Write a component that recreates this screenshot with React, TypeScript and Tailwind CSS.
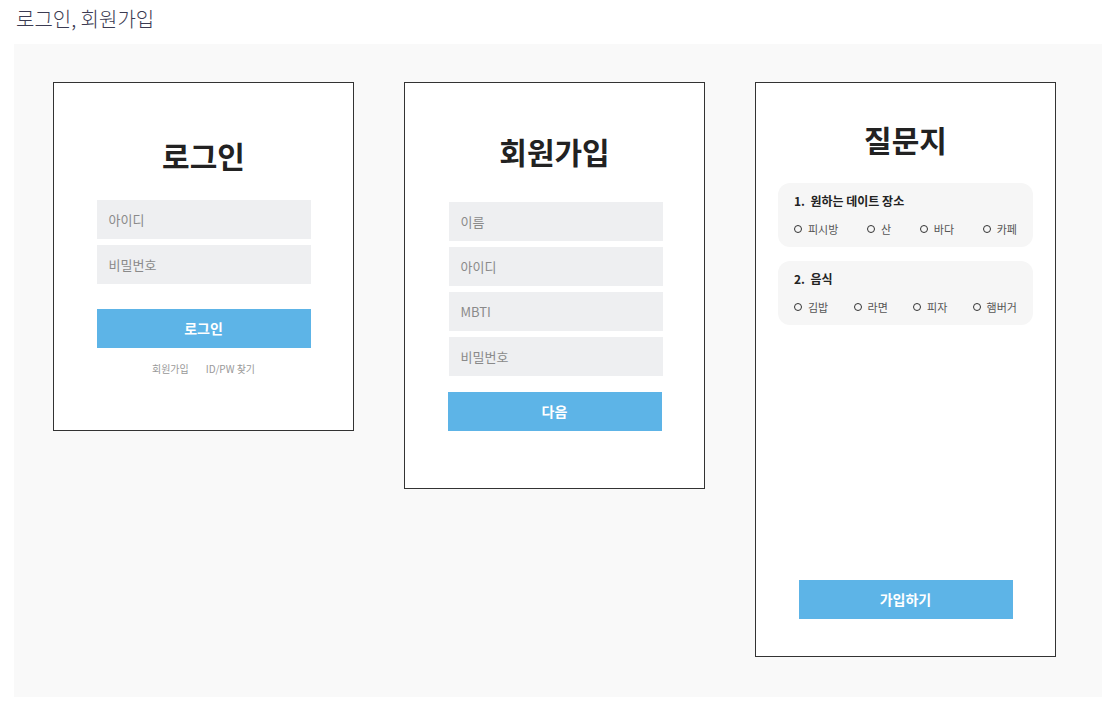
import React from 'react';

const font = { fontFamily: '"Noto Sans CJK KR", "Noto Sans", sans-serif' };

const Field = ({ label }: { label: string }) => (
  <div className="h-[39px] w-full bg-[#eeeff1] flex items-center pl-3 text-[13px] text-[#8a8a8a]">{label}</div>
);

const BlueButton = ({ label }: { label: string }) => (
  <div className="h-[39px] w-[214px] bg-[#5db4e7] flex items-center justify-center text-[14px] font-bold text-white">{label}</div>
);

const Question = ({ title, options }: { title: string; options: string[] }) => (
  <div className="w-[255px] h-[64px] rounded-[12px] bg-[#f6f6f6] px-4 pt-[10px] flex flex-col gap-[12px]">
    <div className="text-[12px] leading-[16px] font-bold text-[#222] whitespace-pre">{title}</div>
    <div className="flex justify-between text-[11px] leading-[16px] text-[#555]">
      {options.map((o) => (
        <div key={o} className="flex items-center gap-[6px]">
          <span className="w-[8px] h-[8px] rounded-full border-[1.5px] border-[#333] box-border" />
          <span>{o}</span>
        </div>
      ))}
    </div>
  </div>
);

export default function App() {
  return (
    <div className="w-[1118px] h-[709px] bg-white" style={font}>
      <div className="h-[44px] pl-4 pt-[4px] text-[20px] leading-[30px] font-light text-[#3b3b52]">로그인, 회원가입</div>
      <div className="ml-[14px] mr-[16px] h-[653px] bg-[#f9f9f9] pl-[39px] pt-[38px] flex items-start gap-[50px]">
        {/* 로그인 */}
        <div className="w-[301px] h-[349px] bg-white border border-[#333] flex flex-col items-center pt-[54px]">
          <h1 className="text-[30px] leading-[36px] font-bold text-[#222]">로그인</h1>
          <div className="w-[214px] mt-[27px] flex flex-col gap-[6px]">
            <Field label="아이디" />
            <Field label="비밀번호" />
          </div>
          <div className="mt-[25px]">
            <BlueButton label="로그인" />
          </div>
          <div className="mt-[15px] flex gap-[17px] text-[10px] leading-[12px] text-[#999]">
            <span>회원가입</span>
            <span>ID/PW 찾기</span>
          </div>
        </div>

        {/* 회원가입 */}
        <div className="w-[301px] h-[407px] bg-white border border-[#333] flex flex-col items-center pt-[50px]">
          <h1 className="text-[30px] leading-[36px] font-bold text-[#222]">회원가입</h1>
          <div className="w-[214px] mt-[33px] ml-[2px] flex flex-col gap-[6px]">
            <Field label="이름" />
            <Field label="아이디" />
            <Field label="MBTI" />
            <Field label="비밀번호" />
          </div>
          <div className="mt-[16px]">
            <BlueButton label="다음" />
          </div>
        </div>

        {/* 질문지 */}
        <div className="w-[301px] h-[575px] bg-white border border-[#333] flex flex-col items-center pt-[38px] pb-[37px]">
          <h1 className="text-[30px] leading-[36px] font-bold text-[#222]">질문지</h1>
          <div className="mt-[26px] flex flex-col gap-[14px]">
            <Question title="1.  원하는 데이트 장소" options={['피시방', '산', '바다', '카페']} />
            <Question title="2.  음식" options={['김밥', '라면', '피자', '햄버거']} />
          </div>
          <div className="mt-auto">
            <BlueButton label="가입하기" />
          </div>
        </div>
      </div>
    </div>
  );
}
